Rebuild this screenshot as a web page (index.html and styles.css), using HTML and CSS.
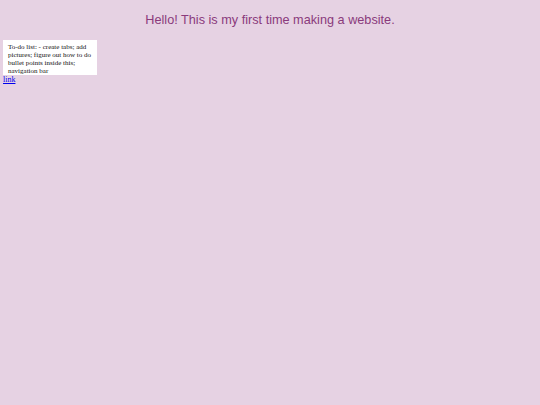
FILE: index.html
```html
<!DOCTYPE html>
<html>
<head>
<meta charset="utf-8">
<link rel="stylesheet" href="styles.css">
</head>
<body>
<h1 class="title">Hello! This is my first time making a website.</h1>
<div class="todo">To-do list: - create tabs; add pictures; figure out how to do bullet points inside this; navigation bar</div>
<a class="link" href="#">link</a>
</body>
</html>
```

FILE: styles.css
```css
html, body {
  margin: 0;
  padding: 0;
  background: #e6d2e3;
}
body {
  padding: 0 3px;
  font-family: "Liberation Serif", serif;
}
.title {
  margin: 0;
  padding-top: 12px;
  height: 28px;
  box-sizing: border-box;
  text-align: center;
  font-family: "Liberation Sans", Arial, sans-serif;
  font-weight: normal;
  font-size: 12.7px;
  line-height: 16px;
  color: #8a3a7c;
}
.todo {
  width: 94px;
  box-sizing: border-box;
  margin-top: 12px;
  background: #ffffff;
  padding: 3px 4px 0 5px;
  font-size: 7px;
  line-height: 8px;
  color: #111;
}
.link {
  display: block;
  margin-top: 1px;
  font-size: 8px;
  line-height: 8px;
  color: #0000ee;
  width: max-content;
}
```
